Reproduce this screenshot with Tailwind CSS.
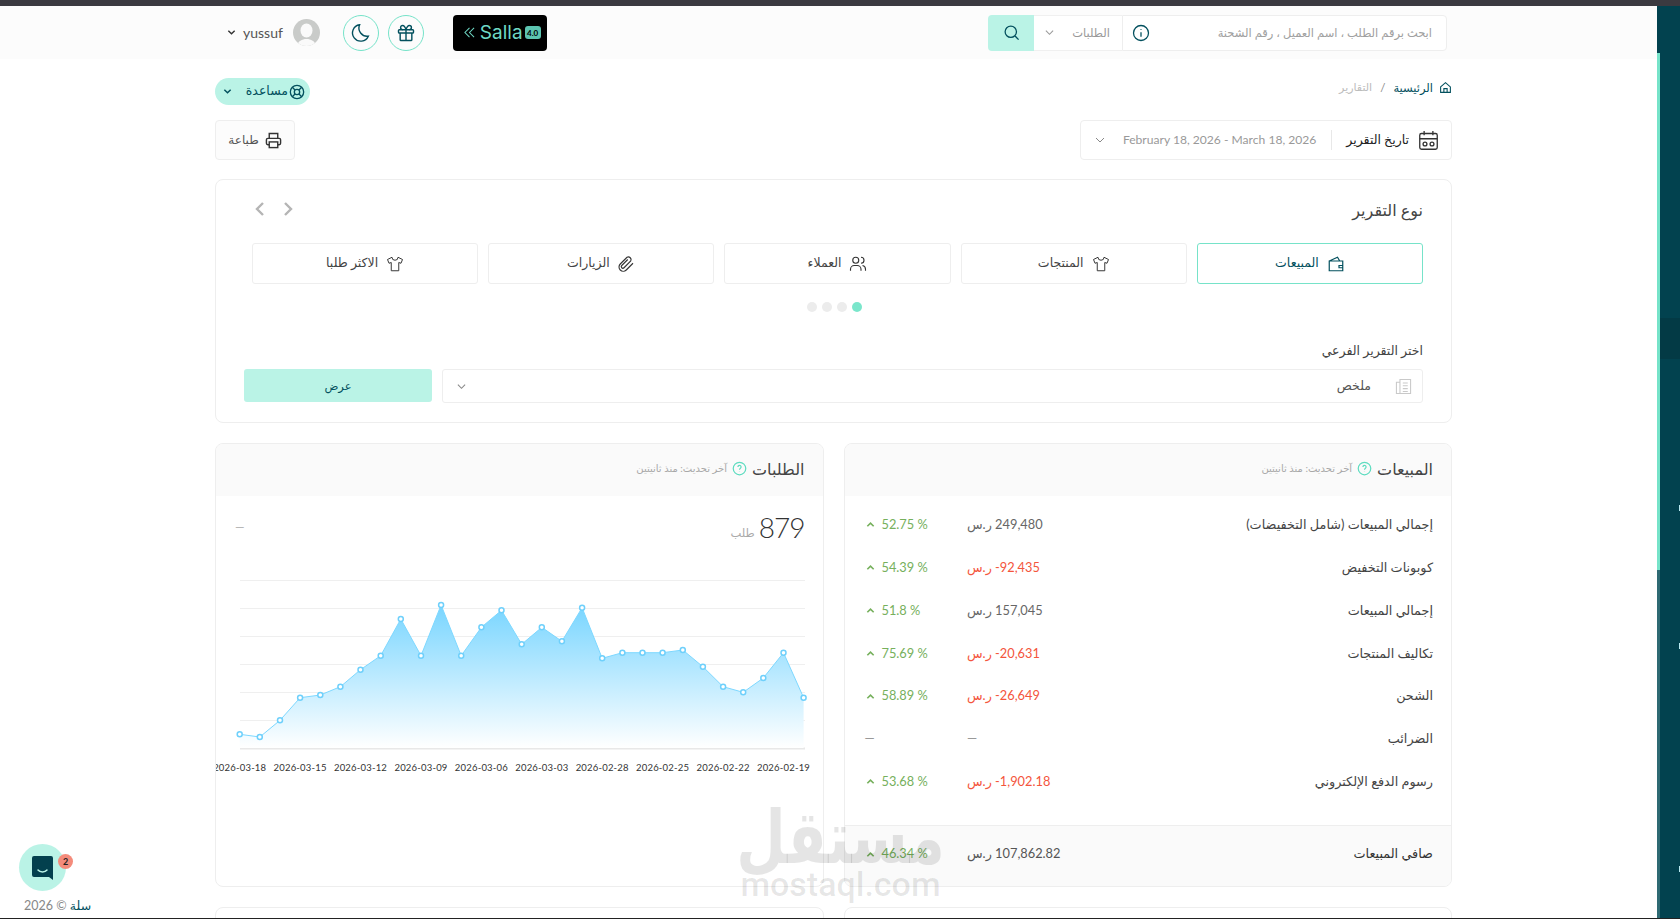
<!DOCTYPE html>
<html lang="ar">
<head>
<meta charset="utf-8">
<script src="https://cdn.jsdelivr.net/npm/@tailwindcss/browser@4"></script>
<title>التقارير</title>
</head>
<body class="bg-white">
<div class="relative w-[1680px] h-[919px] overflow-hidden flex flex-col bg-white font-['Lato','DejaVu_Sans',sans-serif] text-[#444]">
  <div class="h-[6px] shrink-0 bg-[#3b3a40]"></div>
  <div class="flex flex-1 min-h-0">
    <!-- main -->
    <div class="flex-1 min-w-0 overflow-hidden">
      <header class="h-[53px] bg-[#fcfcfc] pl-[215px] pr-[205px] flex items-center">
        <div dir="rtl" class="w-full flex items-center justify-between pr-[5px] pl-[12px]">
          <div class="flex h-[36px] w-[459px]">
            <div class="w-[325px] bg-white border border-[#eeeeee] rounded-r-[4px] flex items-center justify-between pr-[14px] pl-[9px] text-[11.5px] text-[#a0a0a0]">
              <span>ابحث برقم الطلب ، اسم العميل ، رقم الشحنة</span>
              <svg class="w-[18px] h-[18px] text-[#03505e]" viewBox="0 0 24 24" fill="none" stroke="currentColor" stroke-width="1.7"><circle cx="12" cy="12" r="10"/><path d="M12 11v6M12 7v1"/></svg>
            </div>
            <div class="w-[88px] bg-white border-y border-[#f0f0f0] flex items-center justify-between pr-[12px] pl-[11px] text-[11.5px] text-[#999]">
              <span>الطلبات</span>
              <svg class="w-[9px] h-[9px]" viewBox="0 0 10 10" fill="none" stroke="currentColor" stroke-width="1.2"><path d="M1 3l4 4 4-4"/></svg>
            </div>
            <div class="w-[46px] bg-[#baf3e6] rounded-l-[4px] flex items-center justify-center">
              <svg class="w-[17px] h-[17px] text-[#03505e]" viewBox="0 0 24 24" fill="none" stroke="currentColor" stroke-width="1.8"><circle cx="11" cy="11" r="8"/><path d="M17 17l5 5"/></svg>
            </div>
          </div>
          <div class="flex items-center">
            <div dir="ltr" class="w-[94px] h-[36px] bg-black rounded-[4px] flex items-center pl-[11px] text-[#6fd9c5]">
              <svg class="w-[11px] h-[11px]" viewBox="0 0 12 12" fill="none" stroke="currentColor" stroke-width="1.1"><path d="M6 1L1 6l5 5M11 1L6 6l5 5"/></svg>
              <span class="ml-[5px] text-[19px] font-['Inter'] leading-none">Salla</span>
              <span class="ml-[2px] w-[16px] h-[13px] rounded-[3px] bg-[#5cc4b0] text-black text-[8px] font-bold flex items-center justify-center">4.0</span>
            </div>
            <div class="mr-[29px] w-[36px] h-[36px] rounded-full border border-[#76e3c9] flex items-center justify-center">
              <svg class="w-[20px] h-[20px] text-[#03505e]" viewBox="0 0 24 24" fill="none" stroke="currentColor" stroke-width="1.7"><rect x="3" y="8" width="18" height="4" rx="1"/><path d="M5 12v8a1 1 0 001 1h12a1 1 0 001-1v-8M12 8v13M12 8S10.5 3 8 3a2.5 2.5 0 000 5M12 8s1.500-5 4-5a2.500 2.500 0 010 5"/></svg>
            </div>
            <div class="mr-[9px] w-[36px] h-[36px] rounded-full border border-[#76e3c9] flex items-center justify-center">
              <svg class="w-[22px] h-[22px] text-[#03505e]" viewBox="0 0 24 24" fill="none" stroke="currentColor" stroke-width="1.5"><path d="M20 15.500A9 9 0 0 1 10.500 3 9 9 0 1 0 20 15.500z"/></svg>
            </div>
            <div class="mr-[23px] w-[27px] h-[27px] rounded-full bg-[#c9cbc9] overflow-hidden">
              <svg class="w-full h-full" viewBox="0 0 27 27"><ellipse cx="13.500" cy="11.500" rx="6" ry="7" fill="#fafafa"/><path d="M4 27c1-5 5-7 9.500-7s8.500 2 9.500 7z" fill="#fafafa"/></svg>
            </div>
            <span class="mr-[10px] text-[14px] text-[#555]">yussuf</span>
            <svg class="mr-[7px] w-[9px] h-[9px] text-[#333]" viewBox="0 0 10 10" fill="none" stroke="currentColor" stroke-width="1.5"><path d="M1.500 3l3.500 3.500L8.500 3"/></svg>
          </div>
        </div>
      </header>

      <main class="pl-[215px] pr-[205px]" dir="rtl">
        <div class="flex items-start justify-between pt-[19px] h-[61px]">
          <nav class="flex items-center text-[11.5px] mt-[1px] text-[#03505e]">
            <svg class="w-[13px] h-[13px] ml-[6px]" viewBox="0 0 24 24" fill="none" stroke="currentColor" stroke-width="2"><path d="M3 11l9-8 9 8v10H3z"/><path d="M9 21v-7h6v7"/></svg>
            <span>الرئيسية</span>
            <span class="mx-[8px] text-[#888]">/</span>
            <span class="text-[11px] text-[#bcbcbc]">التقارير</span>
          </nav>
          <button class="h-[27px] w-[95px] rounded-full bg-[#baf3e6] flex items-center justify-between px-[5px] pl-[8px] text-[12.5px] text-[#03505e]">
            <span class="flex items-center gap-[1px]">
              <svg class="w-[16px] h-[16px]" viewBox="0 0 24 24" fill="none" stroke="currentColor" stroke-width="2"><circle cx="12" cy="12" r="10"/><circle cx="12" cy="12" r="4"/><path d="M5 5l4 4M19 5l-4 4M5 19l4-4M19 19l-4-4"/></svg>
              <span>مساعدة</span>
            </span>
            <svg class="w-[9px] h-[9px]" viewBox="0 0 10 10" fill="none" stroke="currentColor" stroke-width="1.600"><path d="M1.500 3l3.500 3.500L8.500 3"/></svg>
          </button>
        </div>

        <div class="flex items-center justify-between h-[40px]">
          <div class="w-[372px] h-[40px] bg-white border border-[#eeeeee] rounded-[4px] flex items-center pr-[12px] pl-[14px]">
            <svg class="w-[21px] h-[21px] text-[#333]" viewBox="0 0 24 24" fill="none" stroke="currentColor" stroke-width="1.500"><rect x="2" y="4" width="20" height="18" rx="2"/><path d="M2 10h20M7 1v5M17 1v5"/><circle cx="8" cy="16" r="2.200"/><circle cx="16" cy="16" r="2.200"/></svg>
            <span class="mr-[9px] text-[12.500px] font-medium text-[#222] whitespace-nowrap">تاريخ التقرير</span>
            <span class="mr-[14px] w-px h-[20px] bg-[#e8e8e8]"></span>
            <span class="mr-[15px] text-[12.100px] text-[#999] whitespace-nowrap" dir="ltr">February 18, 2026 - March 18, 2026</span>
            <svg class="mr-auto w-[10px] h-[10px] text-[#888]" viewBox="0 0 10 10" fill="none" stroke="currentColor" stroke-width="1"><path d="M1 3l4 4 4-4"/></svg>
          </div>
          <button class="w-[80px] h-[40px] bg-[#fcfcfc] border border-[#eeeeee] rounded-[4px] flex items-center justify-center gap-[6px] text-[12px] text-[#555]">
            <svg class="w-[17px] h-[17px] text-[#333]" viewBox="0 0 24 24" fill="none" stroke="currentColor" stroke-width="2"><path d="M6 9V2h12v7M6 18H4a2 2 0 01-2-2v-5a2 2 0 012-2h16a2 2 0 012 2v5a2 2 0 01-2 2h-2"/><rect x="6" y="14" width="12" height="8"/></svg>
            <span>طباعة</span>
          </button>
        </div>

        <!-- report type -->
        <section class="mt-[19px] h-[244px] border border-[#eeeeee] rounded-[8px] px-[28px] pt-[15px] bg-white">
          <div class="flex items-center justify-between h-[27px]">
            <h2 class="text-[16px] text-[#444] leading-none pt-[2px]">نوع التقرير</h2>
            <div class="flex items-center gap-[14px] ml-[9px] text-[#b5b5b5]">
              <svg class="w-[14px] h-[16px]" viewBox="0 0 14 16" fill="none" stroke="currentColor" stroke-width="2.400"><path d="M4 2l6 6-6 6"/></svg>
              <svg class="w-[14px] h-[16px]" viewBox="0 0 14 16" fill="none" stroke="currentColor" stroke-width="2.400"><path d="M10 2L4 8l6 6"/></svg>
            </div>
          </div>
          <div class="mt-[21px] ml-[8px] grid grid-cols-5 gap-[10px] text-[12.500px]">
            <div class="h-[41px] border border-[#76e3c9] rounded-[3px] flex items-center justify-center gap-[8px] text-[#03505e]">
              <svg class="w-[18px] h-[18px]" viewBox="0 0 24 24" fill="none" stroke="currentColor" stroke-width="1.600"><path d="M3 8h18v13H3zM3 8l11-5 3 5M21 14h-5v3h5"/></svg>
              <span>المبيعات</span>
            </div>
            <div class="h-[41px] border border-[#eeeeee] rounded-[3px] flex items-center justify-center gap-[8px]">
              <svg class="w-[18px] h-[18px] text-[#333]" viewBox="0 0 24 24" fill="none" stroke="currentColor" stroke-width="1.300"><path d="M8 3L2 6l2 5 3-1v11h10V10l3 1 2-5-6-3a4 4 0 01-8 0z"/></svg>
              <span>المنتجات</span>
            </div>
            <div class="h-[41px] border border-[#eeeeee] rounded-[3px] flex items-center justify-center gap-[8px]">
              <svg class="w-[18px] h-[18px] text-[#333]" viewBox="0 0 24 24" fill="none" stroke="currentColor" stroke-width="1.500"><circle cx="9" cy="7" r="4"/><path d="M2 21v-2a5 5 0 015-5h4a5 5 0 015 5v2M16 3a4 4 0 010 8M18 14a5 5 0 014 5v2"/></svg>
              <span>العملاء</span>
            </div>
            <div class="h-[41px] border border-[#eeeeee] rounded-[3px] flex items-center justify-center gap-[8px]">
              <svg class="w-[18px] h-[18px] text-[#333]" viewBox="0 0 24 24" fill="none" stroke="currentColor" stroke-width="1.500"><path d="M20 11l-9 9a5.500 5.500 0 01-8-8l9-9a3.700 3.700 0 015 5l-9 9a1.800 1.800 0 01-3-3l8-8"/></svg>
              <span>الزيارات</span>
            </div>
            <div class="h-[41px] border border-[#eeeeee] rounded-[3px] flex items-center justify-center gap-[8px]">
              <svg class="w-[18px] h-[18px] text-[#333]" viewBox="0 0 24 24" fill="none" stroke="currentColor" stroke-width="1.300"><path d="M8 3L2 6l2 5 3-1v11h10V10l3 1 2-5-6-3a4 4 0 01-8 0z"/></svg>
              <span>الاكثر طلبا</span>
            </div>
          </div>
          <div class="mt-[18px] flex justify-center gap-[5px] pl-[2px]">
            <span class="w-[10px] h-[10px] rounded-full bg-[#7ae6cb]"></span>
            <span class="w-[10px] h-[10px] rounded-full bg-[#ececec]"></span>
            <span class="w-[10px] h-[10px] rounded-full bg-[#ececec]"></span>
            <span class="w-[10px] h-[10px] rounded-full bg-[#ececec]"></span>
          </div>
          <div class="mt-[29px] text-[12.500px] text-[#444] leading-[20px]">اختر التقرير الفرعي</div>
          <div class="mt-[8px] flex gap-[10px] h-[34px]">
            <div class="flex-1 border border-[#eeeeee] rounded-[3px] flex items-center pr-[10px] pl-[14px] text-[12.500px] text-[#555]">
              <svg class="w-[17px] h-[17px] text-[#c9c9c9]" viewBox="0 0 24 24" fill="none" stroke="currentColor" stroke-width="1.500"><path d="M7 2h15v20H7zM7 6H2v16h5M11 7h7M11 11h7M11 15h7M11 19h7"/></svg>
              <span class="mr-[24px]">ملخص</span>
              <svg class="mr-auto w-[9px] h-[9px] text-[#888]" viewBox="0 0 10 10" fill="none" stroke="currentColor" stroke-width="1.200"><path d="M1 3l4 4 4-4"/></svg>
            </div>
            <button class="w-[188px] h-[33px] bg-[#baf3e6] rounded-[3px] text-[11.500px] text-[#03505e]">عرض</button>
          </div>
        </section>

        <!-- two cards -->
        <div class="mt-[20px] grid grid-cols-2 gap-[20px]">
          <section class="h-[444px] border border-[#eeeeee] rounded-[8px] overflow-hidden flex flex-col bg-white">
            <div class="h-[52px] bg-[#fafafa] flex items-center gap-[5px] pr-[18px] pb-[3px]">
              <h3 class="text-[16px] text-[#444]">المبيعات</h3>
              <svg class="w-[15px] h-[15px] text-[#5fdcc0]" viewBox="0 0 24 24" fill="none" stroke="currentColor" stroke-width="2"><circle cx="12" cy="12" r="10"/><path d="M9.500 9.500a2.500 2.500 0 114 2c-1 .6-1.500 1.200-1.500 2.500M12 17v.5"/></svg>
              <span class="text-[10px] text-[#a8a8a8]">آخر تحديث: منذ ثانيتين</span>
            </div>
            <div class="flex-1 pt-[7px]">
              <div class="grid grid-cols-[1fr_150px_102.5px] items-center h-[42.900px] pr-[18px] pl-[20px] text-[12.800px]"><span class="text-[#444]">إجمالي المبيعات (شامل التخفيضات)</span><span class="text-left text-[#666]">249,480 ر.س</span><span dir="ltr" class="flex items-center gap-[7px] text-[#76b05c]"><svg class="w-[9px] h-[9px] ml-[1px]" viewBox="0 0 10 10" fill="none" stroke="currentColor" stroke-width="1.800"><path d="M1.500 7L5 3.500 8.500 7"/></svg>52.75 %</span></div>
              <div class="grid grid-cols-[1fr_150px_102.5px] items-center h-[42.900px] pr-[18px] pl-[20px] text-[12.800px]"><span class="text-[#444]">كوبونات التخفيض</span><span class="text-left text-[#f4553c]"><bdi dir="ltr">-92,435</bdi> ر.س</span><span dir="ltr" class="flex items-center gap-[7px] text-[#76b05c]"><svg class="w-[9px] h-[9px] ml-[1px]" viewBox="0 0 10 10" fill="none" stroke="currentColor" stroke-width="1.800"><path d="M1.500 7L5 3.500 8.500 7"/></svg>54.39 %</span></div>
              <div class="grid grid-cols-[1fr_150px_102.5px] items-center h-[42.900px] pr-[18px] pl-[20px] text-[12.800px]"><span class="text-[#444]">إجمالي المبيعات</span><span class="text-left text-[#666]">157,045 ر.س</span><span dir="ltr" class="flex items-center gap-[7px] text-[#76b05c]"><svg class="w-[9px] h-[9px] ml-[1px]" viewBox="0 0 10 10" fill="none" stroke="currentColor" stroke-width="1.800"><path d="M1.500 7L5 3.500 8.500 7"/></svg>51.8 %</span></div>
              <div class="grid grid-cols-[1fr_150px_102.5px] items-center h-[42.900px] pr-[18px] pl-[20px] text-[12.800px]"><span class="text-[#444]">تكاليف المنتجات</span><span class="text-left text-[#f4553c]"><bdi dir="ltr">-20,631</bdi> ر.س</span><span dir="ltr" class="flex items-center gap-[7px] text-[#76b05c]"><svg class="w-[9px] h-[9px] ml-[1px]" viewBox="0 0 10 10" fill="none" stroke="currentColor" stroke-width="1.800"><path d="M1.500 7L5 3.500 8.500 7"/></svg>75.69 %</span></div>
              <div class="grid grid-cols-[1fr_150px_102.5px] items-center h-[42.900px] pr-[18px] pl-[20px] text-[12.800px]"><span class="text-[#444]">الشحن</span><span class="text-left text-[#f4553c]"><bdi dir="ltr">-26,649</bdi> ر.س</span><span dir="ltr" class="flex items-center gap-[7px] text-[#76b05c]"><svg class="w-[9px] h-[9px] ml-[1px]" viewBox="0 0 10 10" fill="none" stroke="currentColor" stroke-width="1.800"><path d="M1.500 7L5 3.500 8.500 7"/></svg>58.89 %</span></div>
              <div class="grid grid-cols-[1fr_150px_102.5px] items-center h-[42.900px] pr-[18px] pl-[20px] text-[12.800px]"><span class="text-[#444]">الضرائب</span><span class="text-left text-[#999]">—</span><span dir="ltr" class="text-[#999]">—</span></div>
              <div class="grid grid-cols-[1fr_150px_102.5px] items-center h-[42.900px] pr-[18px] pl-[20px] text-[12.800px]"><span class="text-[#444]">رسوم الدفع الإلكتروني</span><span class="text-left text-[#f4553c]"><bdi dir="ltr">-1,902.18</bdi> ر.س</span><span dir="ltr" class="flex items-center gap-[7px] text-[#76b05c]"><svg class="w-[9px] h-[9px] ml-[1px]" viewBox="0 0 10 10" fill="none" stroke="currentColor" stroke-width="1.800"><path d="M1.500 7L5 3.500 8.500 7"/></svg>53.68 %</span></div>
            </div>
            <div class="h-[61px] pb-[4px] bg-[#fafafa] border-t border-[#eeeeee] grid grid-cols-[1fr_150px_102.5px] items-center pr-[18px] pl-[20px] text-[12.800px]"><span class="text-[#333]">صافي المبيعات</span><span class="text-left text-[#555]">107,862.82 ر.س</span><span dir="ltr" class="flex items-center gap-[7px] text-[#76b05c]"><svg class="w-[9px] h-[9px] ml-[1px]" viewBox="0 0 10 10" fill="none" stroke="currentColor" stroke-width="1.800"><path d="M1.500 7L5 3.500 8.500 7"/></svg>46.34 %</span></div>
          </section>

          <section class="h-[444px] border border-[#eeeeee] rounded-[8px] overflow-hidden bg-white">
            <div class="h-[52px] bg-[#fafafa] flex items-center gap-[5px] pr-[18px] pb-[3px]">
              <h3 class="text-[16px] text-[#444]">الطلبات</h3>
              <svg class="w-[15px] h-[15px] text-[#5fdcc0]" viewBox="0 0 24 24" fill="none" stroke="currentColor" stroke-width="2"><circle cx="12" cy="12" r="10"/><path d="M9.500 9.500a2.500 2.500 0 114 2c-1 .6-1.500 1.200-1.500 2.500M12 17v.5"/></svg>
              <span class="text-[10px] text-[#a8a8a8]">آخر تحديث: منذ ثانيتين</span>
            </div>
            <div class="flex items-center justify-between h-[62px] pr-[18px] pl-[19px]">
              <div class="flex items-end gap-[4px]">
                <span class="text-[28px] leading-none font-light tracking-[-1px] text-[#333]">879</span>
                <span class="text-[11.500px] text-[#aaa]">طلب</span>
              </div>
              <span class="text-[#aaa] text-[12px]">—</span>
            </div>
            <svg dir="ltr" class="block mt-[12px] w-[607px]" height="210" viewBox="0 0 607 210">
              <defs>
                <linearGradient id="areaFill" x1="0" y1="0" x2="0" y2="1">
                  <stop offset="0" stop-color="#78d5ff"/>
                  <stop offset="1" stop-color="#ffffff"/>
                </linearGradient>
              </defs>
              <g stroke="#efefef" stroke-width="1">
                <path d="M24 10.500H589M24 38.500H589M24 66.500H589M24 94.500H589M24 122.500H589M24 150.500H589"/>
                <path d="M24 178.500H589" stroke="#e8e8e8" stroke-width="2"/>
              </g>
              <path fill="url(#areaFill)" d="M23.700 164.300 43.800 167 64 150.300 84.100 127.700 104.300 125 124.400 116.700 144.500 99.700 164.700 85.700 184.800 49 205 85.700 225.100 35 245.200 85.700 265.400 57.300 285.500 40.300 305.700 74.300 325.800 57.300 345.900 71.300 366.100 37.700 386.200 88.300 406.400 82.700 426.500 82.700 446.600 82.700 466.800 80 486.900 96.700 507.100 116.700 527.200 122.300 547.300 108 567.500 82.700 587.600 127.700 587.600 178 23.700 178Z"/>
              <path fill="none" stroke="#7dd8ff" stroke-width="1" d="M23.700 164.300 43.800 167 64 150.300 84.100 127.700 104.300 125 124.400 116.700 144.500 99.700 164.700 85.700 184.800 49 205 85.700 225.100 35 245.200 85.700 265.400 57.300 285.500 40.300 305.700 74.300 325.800 57.300 345.900 71.300 366.100 37.700 386.200 88.300 406.400 82.700 426.500 82.700 446.600 82.700 466.800 80 486.900 96.700 507.100 116.700 527.200 122.300 547.300 108 567.500 82.700 587.600 127.700"/>
              <g fill="#fff" stroke="#6fd0fb" stroke-width="1.500">
                <circle cx="23.700" cy="164.300" r="2.500"/><circle cx="43.800" cy="167" r="2.500"/><circle cx="64" cy="150.300" r="2.500"/><circle cx="84.100" cy="127.700" r="2.500"/><circle cx="104.300" cy="125" r="2.500"/><circle cx="124.400" cy="116.700" r="2.500"/><circle cx="144.500" cy="99.700" r="2.500"/><circle cx="164.700" cy="85.700" r="2.500"/><circle cx="184.800" cy="49" r="2.500"/><circle cx="205" cy="85.700" r="2.500"/><circle cx="225.100" cy="35" r="2.500"/><circle cx="245.200" cy="85.700" r="2.500"/><circle cx="265.400" cy="57.300" r="2.500"/><circle cx="285.500" cy="40.300" r="2.500"/><circle cx="305.700" cy="74.300" r="2.500"/><circle cx="325.800" cy="57.300" r="2.500"/><circle cx="345.900" cy="71.300" r="2.500"/><circle cx="366.100" cy="37.700" r="2.500"/><circle cx="386.200" cy="88.300" r="2.500"/><circle cx="406.400" cy="82.700" r="2.500"/><circle cx="426.500" cy="82.700" r="2.500"/><circle cx="446.600" cy="82.700" r="2.500"/><circle cx="466.800" cy="80" r="2.500"/><circle cx="486.900" cy="96.700" r="2.500"/><circle cx="507.100" cy="116.700" r="2.500"/><circle cx="527.200" cy="122.300" r="2.500"/><circle cx="547.300" cy="108" r="2.500"/><circle cx="567.500" cy="82.700" r="2.500"/><circle cx="587.600" cy="127.700" r="2.500"/>
              </g>
              <g fill="#333" font-size="9.500" text-anchor="middle" letter-spacing="0.200">
                <text x="23.700" y="201">2026-03-18</text><text x="84.100" y="201">2026-03-15</text><text x="144.500" y="201">2026-03-12</text><text x="205" y="201">2026-03-09</text><text x="265.400" y="201">2026-03-06</text><text x="325.800" y="201">2026-03-03</text><text x="386.200" y="201">2026-02-28</text><text x="446.600" y="201">2026-02-25</text><text x="507.100" y="201">2026-02-22</text><text x="567.500" y="201">2026-02-19</text>
              </g>
            </svg>
          </section>
        </div>
        <div class="mt-[20px] grid grid-cols-2 gap-[20px]">
          <div class="h-[60px] border border-[#eeeeee] rounded-[8px]"></div>
          <div class="h-[60px] border border-[#eeeeee] rounded-[8px]"></div>
        </div>
      </main>
    </div>

    <!-- right rail -->
    <aside class="w-[23px] shrink-0 bg-[#02424f] flex">
      <div class="w-[3px] bg-[#2f6a73] flex flex-col">
        <div class="h-[47px] bg-[#02424f]"></div>
        <div class="h-[517px] bg-[#76e3c9]"></div>
      </div>
      <div class="flex-1 relative">
        <div class="absolute top-[312px] inset-x-0 h-[41px] bg-[#033a45]"></div>
        <span class="absolute top-[499px] right-0 w-px h-[6px] bg-[#b9e9f0]"></span>
        <span class="absolute top-[637px] right-0 w-px h-[6px] bg-[#b9e9f0]"></span>
        <span class="absolute top-[860px] right-0 w-px h-[6px] bg-[#b9e9f0]"></span>
      </div>
    </aside>
  </div>

  <!-- chat launcher -->
  <div class="absolute left-[19px] top-[844px] w-[47px] h-[47px] rounded-full bg-[#baf3e6] flex items-center justify-center">
    <svg class="w-[21px] h-[24px]" viewBox="0 0 21 24"><path d="M2 0h17a2 2 0 012 2v22l-4-3H2a2 2 0 01-2-2V2a2 2 0 012-2z" fill="#03404e"/><path d="M6 14c2 2.500 7 2.500 9 0" fill="none" stroke="#baf3e6" stroke-width="1.500" stroke-linecap="round"/></svg>
  </div>
  <div class="absolute left-[58px] top-[854px] w-[15px] h-[15px] rounded-full bg-[#f48b7b] text-[9px] font-bold text-[#222] flex items-center justify-center">2</div>
  <div dir="rtl" class="absolute left-[24px] top-[897px] text-[12.500px] text-[#888] leading-[18px]"><span class="text-[#03505e]">سلة</span> © 2026</div>

  <!-- watermark -->
  <div class="absolute left-[738px] top-[785px] w-[205px] flex flex-col items-center pointer-events-none text-black/10">
    <span class="text-[57px] leading-[80px] font-bold font-['DejaVu_Sans',sans-serif] scale-y-[1.3] origin-top">مستقل</span>
    <span class="mt-[3px] text-[34px] leading-[32px] font-medium font-['Roboto',sans-serif]">mostaql.com</span>
  </div>

  <!-- bottom edge of window -->
  <div class="absolute inset-x-0 bottom-0 h-px bg-[#222]"></div>
</div>
</body>
</html>
